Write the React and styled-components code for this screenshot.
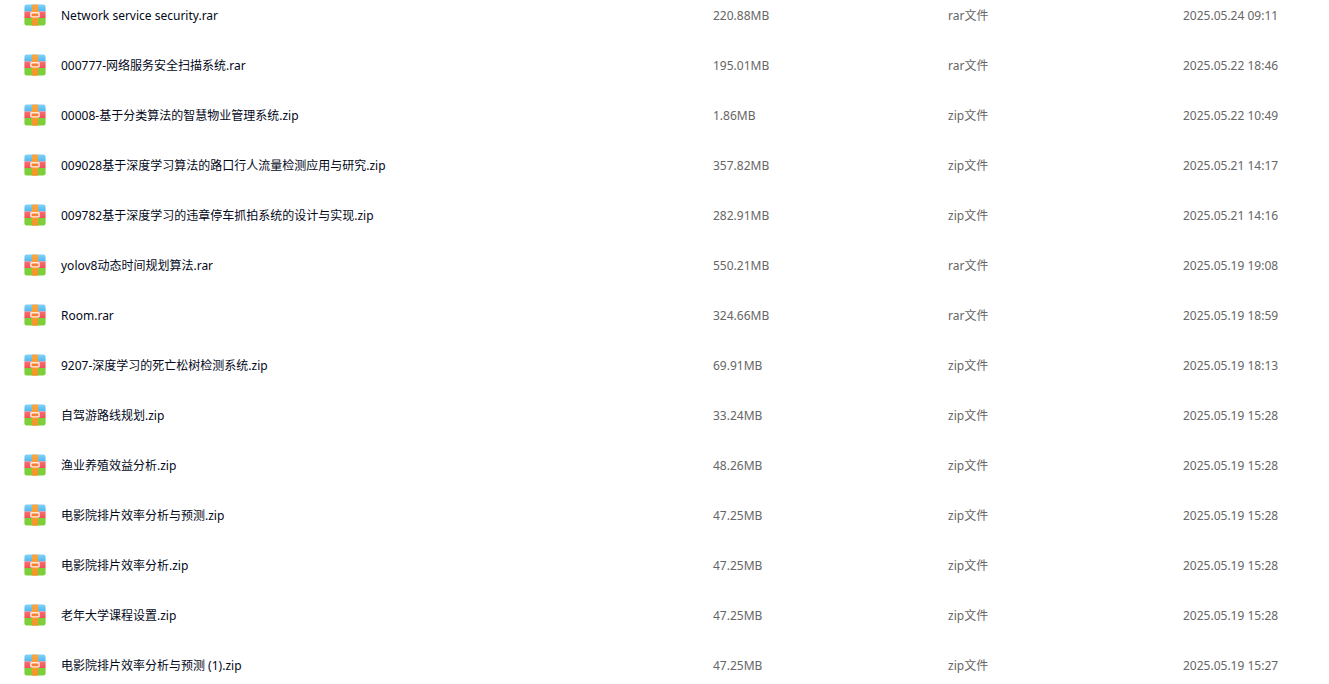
import styled, { createGlobalStyle } from "styled-components";

const GlobalStyle = createGlobalStyle`
  * {
    box-sizing: border-box;
  }

  body {
    margin: 0;
    background-color: #fff;
    font-family: "Noto Sans", "Noto Sans CJK SC", sans-serif;
    font-size: 12px;
  }
`;

const Page = styled.main`
  height: 100vh;
  overflow: hidden;
`;

/* The list is scrolled a little, so the first row is partly cut off */
const Table = styled.table`
  width: 100%;
  margin-top: -10px;
  table-layout: fixed;
  border-collapse: collapse;
`;

const Col = styled.col`
  width: ${(props) => props.$width};
`;

const TableRow = styled.tr`
  height: 50px;
`;

const Cell = styled.td`
  padding: 0;
  color: #666;
  line-height: 20px;
  white-space: nowrap;
  vertical-align: middle;
`;

const Text = styled.span`
  display: block;
  padding-top: 2px;
`;

const FileName = styled.div`
  display: flex;
  align-items: center;
  gap: 15px;
  padding-left: 24px;
  color: #03081a;
`;

const Icon = styled.svg`
  display: block;
  flex-shrink: 0;
  width: 22px;
  height: 22px;
`;

const files = [
  { name: "Network service security.rar", size: "220.88MB", time: "2025.05.24 09:11" },
  { name: "000777-网络服务安全扫描系统.rar", size: "195.01MB", time: "2025.05.22 18:46" },
  { name: "00008-基于分类算法的智慧物业管理系统.zip", size: "1.86MB", time: "2025.05.22 10:49" },
  { name: "009028基于深度学习算法的路口行人流量检测应用与研究.zip", size: "357.82MB", time: "2025.05.21 14:17" },
  { name: "009782基于深度学习的违章停车抓拍系统的设计与实现.zip", size: "282.91MB", time: "2025.05.21 14:16" },
  { name: "yolov8动态时间规划算法.rar", size: "550.21MB", time: "2025.05.19 19:08" },
  { name: "Room.rar", size: "324.66MB", time: "2025.05.19 18:59" },
  { name: "9207-深度学习的死亡松树检测系统.zip", size: "69.91MB", time: "2025.05.19 18:13" },
  { name: "自驾游路线规划.zip", size: "33.24MB", time: "2025.05.19 15:28" },
  { name: "渔业养殖效益分析.zip", size: "48.26MB", time: "2025.05.19 15:28" },
  { name: "电影院排片效率分析与预测.zip", size: "47.25MB", time: "2025.05.19 15:28" },
  { name: "电影院排片效率分析.zip", size: "47.25MB", time: "2025.05.19 15:28" },
  { name: "老年大学课程设置.zip", size: "47.25MB", time: "2025.05.19 15:28" },
  { name: "电影院排片效率分析与预测 (1).zip", size: "47.25MB", time: "2025.05.19 15:27" },
];

function ArchiveIcon() {
  return (
    <Icon viewBox="0 0 22 22" aria-hidden="true">
      <defs>
        <linearGradient id="blue" x1="0" y1="0" x2="0" y2="1">
          <stop offset="0" stopColor="#7fd2fb" />
          <stop offset="1" stopColor="#52b6ec" />
        </linearGradient>
        <linearGradient id="red" x1="0" y1="0" x2="0" y2="1">
          <stop offset="0" stopColor="#fb6f74" />
          <stop offset="1" stopColor="#f0505a" />
        </linearGradient>
        <linearGradient id="orange" x1="0" y1="0" x2="0" y2="1">
          <stop offset="0" stopColor="#fba640" />
          <stop offset="1" stopColor="#f39426" />
        </linearGradient>
      </defs>
      <path d="M0.4 7.5V3A2.4 2.4 0 0 1 2.8 0.6H19.2A2.4 2.4 0 0 1 21.6 3V7.5Z" fill="url(#blue)" />
      <path d="M0.4 7.5H21.6V14H0.4Z" fill="url(#red)" />
      <path d="M0.4 14H21.6V19.2A2.4 2.4 0 0 1 19.2 21.6H2.8A2.4 2.4 0 0 1 0.4 19.2Z" fill="#7ccf38" />
      <path d="M7.9 0.6H14.1V21.6H7.9Z" fill="url(#orange)" />
      <rect x="6.9" y="8.7" width="8.2" height="4.2" rx="0.6" fill="#f5803c" stroke="#ffeedd" strokeWidth="1.4" />
    </Icon>
  );
}

function FileRow({ file }) {
  const { name, size, time } = file;
  const extension = name.split(".").pop();

  return (
    <TableRow>
      <Cell>
        <FileName>
          <ArchiveIcon />
          <Text>{name}</Text>
        </FileName>
      </Cell>
      <Cell>
        <Text>{size}</Text>
      </Cell>
      <Cell>
        <Text>{extension}文件</Text>
      </Cell>
      <Cell>
        <Text>{time}</Text>
      </Cell>
    </TableRow>
  );
}

function App() {
  return (
    <Page>
      <GlobalStyle />
      <Table>
        <colgroup>
          <Col $width="auto" />
          <Col $width="235px" />
          <Col $width="235px" />
          <Col $width="146px" />
        </colgroup>
        <tbody>
          {files.map((file) => (
            <FileRow key={file.name} file={file} />
          ))}
        </tbody>
      </Table>
    </Page>
  );
}

export default App;
